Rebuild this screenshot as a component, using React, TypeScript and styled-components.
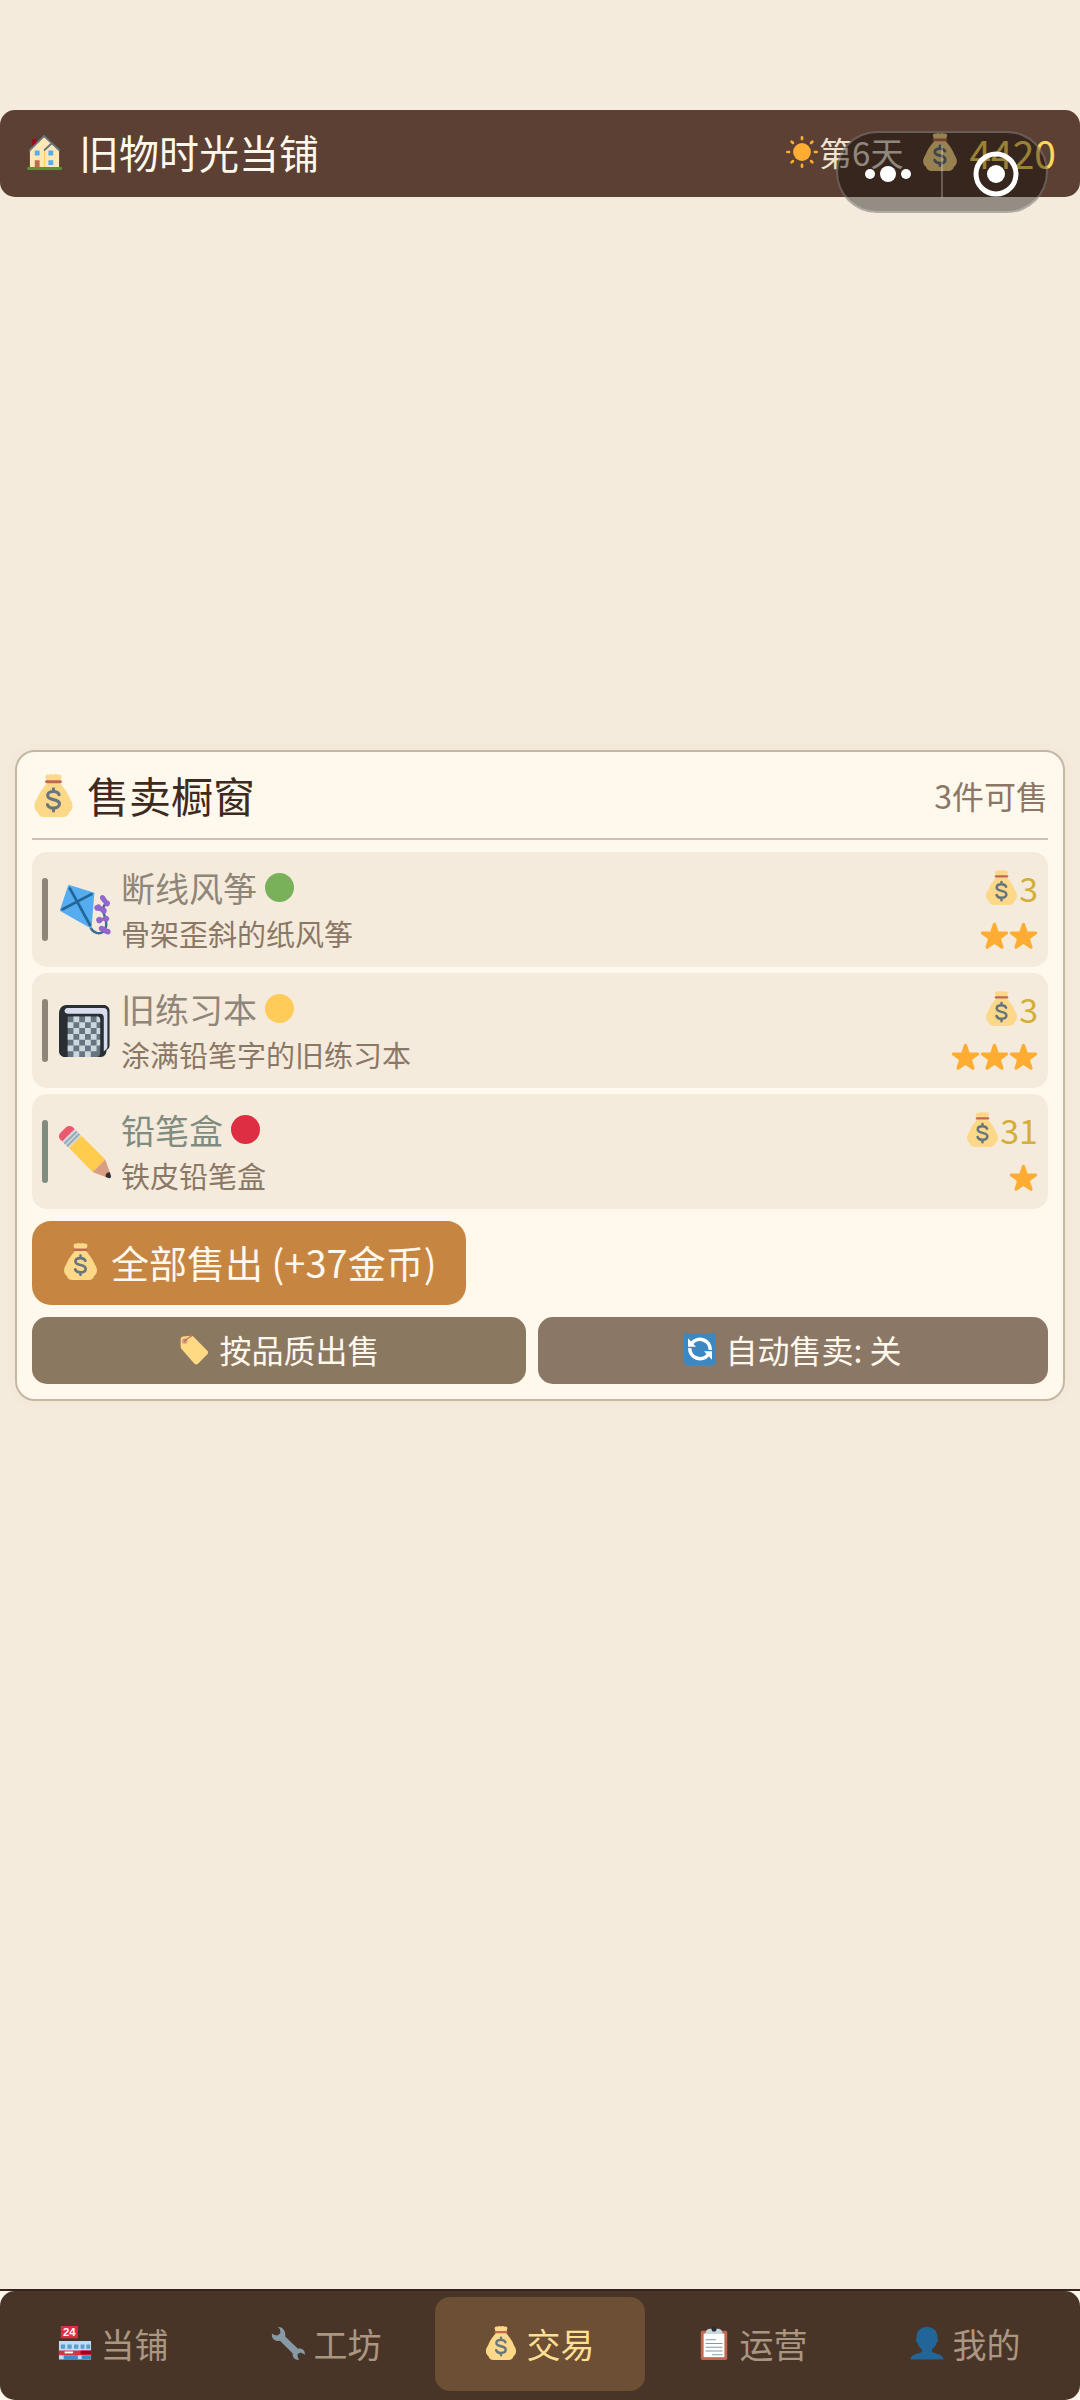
import React from 'react';
import styled, { createGlobalStyle } from 'styled-components';

const GlobalStyle = createGlobalStyle`
   * {
        box-sizing: border-box;
   }
   body {
        margin: 0;
        background: #f5ebdc;
        font-family: "Noto Sans CJK SC", "Noto Sans", sans-serif;
        font-weight: 400;
        color: #3e2a1e;
   }
   button {
        font: inherit;
        border: none;
        cursor: pointer;
   }
`;

const Page = styled.div`
   display: flex;
   flex-direction: column;
   min-height: 100vh;
   padding-top: 110px;
`;

const TopBar = styled.header`
   position: relative;
   display: flex;
   align-items: center;
   justify-content: space-between;
   height: 87px;
   padding: 0 24px 4px 27px;
   border-radius: 15px;
   background: #5c4033;
   color: #fff8ed;
`;

const Brand = styled.h1`
   display: flex;
   align-items: center;
   gap: 17px;
   margin: 0;
   font-size: 40px;
   line-height: 48px;
   font-weight: inherit;
`;

const Status = styled.div`
   display: flex;
   align-items: center;
   font-size: 33px;
   line-height: 48px;
`;

const Day = styled.span`
   margin: 0 18px 0 1px;
   color: #f0e2d0;
`;

const Coins = styled.span`
   margin-left: 10px;
   font-size: 39px;
   color: #ffd85a;
`;

// floats over the top bar, like the mini program host draws it
const Capsule = styled.div`
   position: absolute;
   top: 21px;
   right: 32px;
   display: flex;
   align-items: center;
   width: 212px;
   height: 82px;
   border: 2px solid rgba(255, 255, 255, 0.25);
   border-radius: 41px;
   background: rgba(0, 0, 0, 0.4);
`;

const CapsuleButton = styled.button`
   display: flex;
   flex: 1;
   align-items: center;
   justify-content: center;
   height: 100%;
   padding: 3px 4px 0 0;
   background: none;
   & + & {
        position: relative;
        padding: 3px 0 0 4px;
   }
   & + &::before {
        content: '';
        position: absolute;
        top: 13px;
        left: -1px;
        width: 2px;
        height: 52px;
        background: rgba(255, 255, 255, 0.25);
   }
`;

const Main = styled.main`
   flex: 1;
   padding: 553px 15px 40px;
`;

const Card = styled.section`
   padding: 15px;
   border: 2px solid #c4b8a5;
   border-radius: 20px;
   background: #fff8ed;
   box-shadow: 0 0 12px rgba(92, 64, 51, 0.04);
`;

const CardHeader = styled.div`
   display: flex;
   align-items: center;
   justify-content: space-between;
   height: 73px;
   padding-bottom: 15px;
   border-bottom: 2px solid #cfc3b0;
`;

const CardTitle = styled.h2`
   display: flex;
   align-items: center;
   gap: 12px;
   margin: 0;
   font-size: 42px;
   line-height: 48px;
   font-weight: inherit;
`;

const Count = styled.span`
   font-size: 32px;
   line-height: 48px;
   color: #8b7765;
`;

const List = styled.ul`
   display: flex;
   flex-direction: column;
   gap: 6px;
   margin: 12px 0;
   padding: 0;
   list-style: none;
`;

const Item = styled.li`
   display: flex;
   align-items: center;
   min-height: 115px;
   padding: 0 10px;
   border-radius: 15px;
   background: #f5ebdc;
   .picture {
        margin: 0 10px 0 11px;
   }
`;

const Bar = styled.span<{ $color: string }>`
   width: 6px;
   height: 63px;
   border-radius: 3px;
   background: ${p => p.$color};
`;

const Info = styled.div`
   flex: 1;
   padding-bottom: 2px;
   font-size: 29px;
   line-height: 42px;
   color: #8b7765;
`;

const Name = styled.div<{ $color: string }>`
   display: flex;
   align-items: center;
   gap: 8px;
   font-size: 34px;
   line-height: 48px;
   color: ${p => p.$color};
`;

const Dot = styled.span<{ $color: string }>`
   width: 29px;
   height: 29px;
   border-radius: 50%;
   background: ${p => p.$color};
`;

const Worth = styled.div`
   display: flex;
   flex-direction: column;
   align-items: flex-end;
   padding-top: 4px;
`;

const WorthLine = styled.div`
   display: flex;
   align-items: center;
   height: 48px;
   font-size: 34px;
   line-height: 48px;
   color: #d4af37;
`;

const SellAll = styled.button`
   display: flex;
   align-items: center;
   gap: 12px;
   height: 84px;
   padding: 0 30px 4px;
   border-radius: 19px;
   background: #c68642;
   color: #fff8ed;
   font-size: 38px;
`;

const Actions = styled.div`
   display: flex;
   gap: 12px;
   margin-top: 12px;
`;

const Action = styled.button<{ $color: string }>`
   display: flex;
   flex: 1 1 auto;
   align-items: center;
   justify-content: center;
   gap: 9px;
   height: 67px;
   padding: 0 6px 4px;
   border-radius: 15px;
   background: ${p => p.$color};
   color: #fff8ed;
   font-size: 32px;
`;

const NavShell = styled.footer`
   border-top: 2px solid #34241a;
   background: #fff8ed;
`;

const Nav = styled.nav`
   display: flex;
   gap: 3px;
   padding: 6px 9px 9px;
   border-radius: 15px;
   background: #483528;
`;

const Tab = styled.button<{ $active?: boolean }>`
   display: flex;
   flex: 1 1 0;
   align-items: center;
   justify-content: center;
   gap: 9px;
   height: 94px;
   padding: 0 2px 2px 0;
   border-radius: 15px;
   background: ${p => (p.$active ? '#6d4f36' : 'transparent')};
   color: ${p => (p.$active ? '#ffdf91' : '#ab9682')};
   font-size: 34px;
`;

type IconProps = { size: number; className?: string };

const Drawing = styled.svg`
   flex-shrink: 0;
   overflow: visible;
`;

const Svg = ({ size, className, children }: IconProps & { children: React.ReactNode }) => (
    <Drawing className={className} width={size} height={size} viewBox='0 0 36 36' aria-hidden='true'>
        {children}
    </Drawing>
);

const MoneyBag = (props: IconProps) => <Svg {...props}>
    <path fill='#FDD888' d='M13 6.500C11.500 4.500 10.800 2.300 11.600 1.200 12.300.200 13.500.300 14.300.800 15.200-.200 16.900-.200 18 .600 19.100-.200 20.800-.200 21.700.800 22.500.300 23.700.200 24.400 1.200 25.200 2.300 24.500 4.500 23 6.500z' />
    <path fill='#FDD888' d='M12.600 7.500h10.800c2.500 3.300 6.300 7.200 8 12.300.5 1.500 2.600 3.600 2.600 6.700 0 3-1.500 4.600-2.800 5.500-.4 2.500-2.400 4-5.200 4H10c-2.800 0-4.800-1.500-5.200-4C3.500 31.100 2 29.500 2 26.500c0-3.100 2.100-5.200 2.600-6.700 1.700-5.100 5.500-9 8-12.300z' />
    <path fill='#BF6952' d='M12.200 5.300h11.600c1.600 0 1.600 2.400 0 2.400H12.200c-1.600 0-1.600-2.400 0-2.400z' />
    <path fill='none' stroke='#67757F' strokeWidth='2.600' strokeLinecap='round' d='M22.700 17.200c-.7-1.700-2.500-2.500-4.700-2.500-2.900 0-4.900 1.300-4.900 3.300 0 4.700 9.900 2.200 9.900 7 0 2.200-2.100 3.600-5 3.600-2.500 0-4.400-1-5.100-2.900M18 12.300v2.200M18 28.800v2.200' />
</Svg>;

const House = (props: IconProps) => <Svg {...props}>
    <path fill='#A0041E' d='M5.500 5h4v9h-4z' />
    <path fill='#FFE8B6' d='M3 16.500 17.500 3 33 16.500V34H3z' />
    <path fill='#FFCC4D' d='M17.500 17h1v17h-1z' />
    <path fill='none' stroke='#66757F' strokeWidth='1.900' d='M2.500 17 17.500 2 33.500 17M17.500 17l8-7.500' />
    <path fill='#C1694F' d='M8 27h5v7H8z' />
    <path fill='#5C913B' d='M1.500 34h33a1.500 1.500 0 0 1 0 3h-33a1.500 1.500 0 0 1 0-3z' />
    <path fill='#55ACEE' d='M8 17h5v5H8zM22 17h5v5h-5zM22 27h5v5h-5z' />
</Svg>;

const Sun = (props: IconProps) => <Svg {...props}>
    <circle cx='18' cy='18' r='10' fill='#FFAC33' />
    <path stroke='#FFAC33' strokeWidth='3' strokeLinecap='round' d='M18 1.500v2M18 32.500v2M1.500 18h2M32.500 18h2M6.300 6.300l1.500 1.500M28.200 28.200l1.500 1.500M29.700 6.300l-1.500 1.500M7.800 28.200l-1.500 1.500' />
</Svg>;

const Kite = (props: IconProps) => <Svg {...props}>
    <path fill='none' stroke='#3B6E94' strokeWidth='1.700' strokeLinecap='round' d='M22 30.500c2 3.500 6 4.500 8.500 2.500 3-2.500 2.500-7 1-11-1-2.700-1.500-5 0-7.500' />
    <path fill='#9266CC' d='M29 8a2 2 0 0 1 3 1l1.500 2.500A2 2 0 1 1 33 15.500c-1 0-2-1-2-2L29 11a2 2 0 0 1 0-3zM26 14.500a2 2 0 0 1 3 .5l2 1.500a2 2 0 1 1 0 4c-1 0-1.500-.5-2-1.500l-2-.5a2 2 0 0 1-1-4zM27 23a2 2 0 0 1 2.500.5l2-1a2 2 0 1 1 1 3.500l-2-.5L29 27a2 2 0 0 1-2-4zM28 29.500a2 2 0 0 1 3 0l2.500 1.500a2 2 0 1 1-1 3.500c-1 0-1.500-1-2-1.500l-2-.5a2 2 0 0 1-.5-3z' />
    <path fill='#55ACEE' d='M6.500.500 24.500 6l-2 25L.500 18.500z' />
    <path stroke='#226699' strokeWidth='1.900' strokeLinecap='round' d='M7.500 3 21.500 28.500M2.500 17.500 22.500 7' />
</Svg>;

const Notebook = (props: IconProps) => <Svg {...props}>
    <path fill='#292F33' d='M5 0h26c2.200 0 4 1.700 4 4v24c0 1.500-1 2.500-2 3-.2 3-1.500 5-4 5H4c-2.200 0-4-1.800-4-4V6c0-3.500 2-6 5-6z' />
    <path fill='#D7DDEF' d='M6 2h25c1.700 0 2.500 1.200 2.500 3v24c-.5 1.500-1 2-2.500 3V8.500c0-1.500-.8-2.500-2.500-2.500H6c-3 0-2.800-4 0-4z' />
    <path fill='#66757F' d='M6 8h20.500c1.200 0 2 .8 2 2v23c0 1.500-1 3-2.500 3H6z' />
    <path fill='#CCD6DD' d='M10 8h4v4h-4zM18 8h4v4h-4zM26 8h.5c1.200 0 2 1 2 2v2H26zM6 12h4v4H6zM14 12h4v4h-4zM22 12h4v4h-4zM10 16h4v4h-4zM18 16h4v4h-4zM26 16h2.500v4H26zM6 20h4v4H6zM14 20h4v4h-4zM22 20h4v4h-4zM10 24h4v4h-4zM18 24h4v4h-4zM26 24h2.500v4H26zM6 28h4v4H6zM14 28h4v4h-4zM22 28h4v4h-4zM10 32h4v4h-4zM18 32h4v4h-4z' />
</Svg>;

const Pencil = (props: IconProps) => <Svg {...props}>
    <path fill='#EA596E' d='M1 9.500C-.5 8-.4 6 1 4.600L4.700 1C6.200-.4 8.300-.4 9.800 1L11 2.300 2.400 10.800z' />
    <path fill='#CCD6DD' d='m2.200 10.700 8.600-8.500 4.700 4.500-8.700 8.600z' />
    <path fill='none' stroke='#99AAB5' strokeWidth='1.300' d='m3.700 12.300 8.700-8.600M5.500 14l8.600-8.600' />
    <path fill='#FFCC4D' d='m7 15.300 8.600-8.600L32 23.200l-8.700 8.700z' />
    <path fill='#D99E82' d='m23.300 31.900 8.700-8.700 4 11c.3 1.200-.7 2.200-1.900 1.800z' />
    <path fill='#292F33' d='M32.500 35.300c-.6-1.600.5-3.400 2.600-3.300l.8 2.400c.4 1.100-.6 2-1.700 1.600z' />
</Svg>;

const Star = (props: IconProps) => <Svg {...props}>
    <path fill='#FFAC33' d='M27.287 34.627c-.404 0-.806-.124-1.152-.371L18 28.422l-8.135 5.834c-.343.247-.746.371-1.148.371-.408 0-.816-.126-1.162-.380-.694-.504-.985-1.394-.723-2.209l3.034-9.792-8.062-5.681c-.685-.505-.970-1.393-.708-2.207.264-.814 1.018-1.364 1.874-1.372l9.947-.015 3.179-9.549c.276-.807 1.036-1.349 1.890-1.349s1.612.542 1.886 1.349l3.139 9.549 9.987.015c.856.008 1.610.558 1.874 1.372.264.814-.023 1.702-.708 2.207l-8.062 5.681 3.034 9.792c.262.815-.029 1.705-.723 2.209-.346.254-.754.380-1.162.380z' />
</Svg>;

const Tag = (props: IconProps) => <Svg {...props}>
    <path fill='#FFD983' d='M3 7c0-2 1-3 3-3.200L14.500 3c1.200 0 2 .3 3 1.300L33 20c1.200 1.200 1.200 2.800 0 4L22.500 34.500c-1.200 1.200-2.800 1.200-4 0L4 18c-.7-1-1-1.700-1-3z' />
    <circle cx='7.500' cy='9' r='3.200' fill='#D99E82' />
    <path fill='none' stroke='#C1694F' strokeWidth='1.500' strokeLinecap='round' d='M7.500 9c2-2 4-3.500 6-4.500 2.500-1.200 3-2.500 1.500-4' />
</Svg>;

const Refresh = (props: IconProps) => <Svg {...props}>
    <rect width='36' height='36' rx='3' fill='#3B88C3' />
    <path fill='none' stroke='#fff' strokeWidth='4' d='M9 11.500A11.500 11.500 0 0 1 29.500 19M27 24.500A11.500 11.500 0 0 1 6.500 17' />
    <path fill='#fff' d='M4.500 6v9.500h9zM31.500 30v-9.500h-9z' />
</Svg>;

const Store = (props: IconProps) => <Svg {...props}>
    <path fill='#DD2E44' d='M3 0h18v13H3z' />
    <text x='12' y='11' textAnchor='middle' fontFamily='Liberation Sans, sans-serif' fontSize='12' fontWeight='700' fill='#fff'>24</text>
    <path fill='#BDDDF4' d='M1 16h34v19.500H1z' />
    <path fill='#DD2E44' d='M1 26h34v5H1z' />
    <path fill='#5D9BCB' d='M3 19.500h4.500V24H3zM10 19.500h4.500V24H10zM17 19.500h4.500V24H17zM24 19.500h4V24h-4zM30 19.500h4V24h-4z' />
    <path fill='#4289C1' d='M6 31h15v5H6zM25 31h10v4H25z' />
    <path fill='#fff' d='M7 27h9v2H7z' />
    <path fill='#A0041E' d='M24 26h11v4H24z' />
</Svg>;

const Wrench = (props: IconProps) => <Svg {...props}>
    <path fill='#8899A6' d='M1 8c-.8 6 4 9 8.500 7.500L23 29c-.5 4 2.500 7.500 7 6.500l-1.500-2-.5-3.500 3-2 3.500 1.500 1.200 1.500c1-5-3-8-7.200-6.800L15 11C16 6 12.500.5 7.500 1l2 2.500.5 4-3 2.500-3.500-.5z' />
</Svg>;

const Clipboard = (props: IconProps) => <Svg {...props}>
    <path fill='#C1694F' d='M6 5h24c1.300 0 2 .7 2 2v27c0 1.300-.7 2-2 2H6c-1.300 0-2-.7-2-2V7c0-1.300.7-2 2-2z' />
    <path fill='#fff' d='M7 8h22v25H7z' />
    <path fill='#CCD6DD' d='M9 8.500C9 5 11 3 14 3h8c3 0 5 2 5 5.500z' />
    <circle cx='18' cy='3.200' r='2.700' fill='#292F33' />
    <path stroke='#8899A6' strokeWidth='1.200' d='M9 14.500h11M9 18.500h18M9 22.500h18M9 26.500h18M16 30.500h11' />
</Svg>;

const Person = (props: IconProps) => <Svg {...props}>
    <path fill='#226699' d='M18 1c7 0 11 4.500 11 10.500 0 1 0 1.500.3 2 1 1.500.2 3.500-1 4-1 3.500-2.800 6-5 7.500v2.500c2 1.500 12.200 2 12.200 8H.5c0-6 10.200-6.500 12.200-8V25c-2.200-1.500-4-4-5-7.500-1.200-.5-2-2.500-1-4 .3-.5.300-1 .300-2C7 5.500 11 1 18 1z' />
</Svg>;

const items = [
    { name: '断线风筝', text: '骨架歪斜的纸风筝', icon: Kite, dot: '#78B159', color: '#8f8578', price: 3, stars: 2 },
    { name: '旧练习本', text: '涂满铅笔字的旧练习本', icon: Notebook, dot: '#FFCC5A', color: '#8f8578', price: 3, stars: 3 },
    { name: '铅笔盒', text: '铁皮铅笔盒', icon: Pencil, dot: '#DD2E44', color: '#7f8c7f', price: 31, stars: 1 },
];

const tabs = [
    { label: '当铺', icon: Store },
    { label: '工坊', icon: Wrench },
    { label: '交易', icon: MoneyBag, active: true },
    { label: '运营', icon: Clipboard },
    { label: '我的', icon: Person },
];

const Header = () => {
    return <TopBar>
        <Brand><House size={35}/>旧物时光当铺</Brand>
        <Status>
            <Sun size={32}/>
            <Day>第6天</Day>
            <MoneyBag size={38}/>
            <Coins>4420</Coins>
        </Status>
        <Capsule>
            <CapsuleButton aria-label='更多'>
                <svg width='46' height='18' viewBox='0 0 46 18' fill='#fff'>
                    <circle cx='5' cy='9' r='5'/>
                    <circle cx='23' cy='9' r='8'/>
                    <circle cx='41' cy='9' r='5'/>
                </svg>
            </CapsuleButton>
            <CapsuleButton aria-label='关闭'>
                <svg width='46' height='46' viewBox='0 0 46 46'>
                    <circle cx='23' cy='23' r='20' fill='none' stroke='#fff' strokeWidth='5'/>
                    <circle cx='23' cy='23' r='9' fill='#fff'/>
                </svg>
            </CapsuleButton>
        </Capsule>
    </TopBar>
};

const App = () => {
    return <Page>
        <GlobalStyle/>
        <Header/>
        <Main>
            <Card>
                <CardHeader>
                    <CardTitle><MoneyBag size={43}/>售卖橱窗</CardTitle>
                    <Count>3件可售</Count>
                </CardHeader>
                <List>
                    {items.map(({ icon: Icon, ...item }) => (
                        <Item key={item.name}>
                            <Bar $color={item.color}/>
                            <Icon size={52} className='picture'/>
                            <Info>
                                <Name $color={item.color}>{item.name}<Dot $color={item.dot}/></Name>
                                {item.text}
                            </Info>
                            <Worth>
                                <WorthLine><MoneyBag size={35}/>{item.price}</WorthLine>
                                <WorthLine>
                                    {Array.from({ length: item.stars }, (_, i) => <Star key={i} size={29}/>)}
                                </WorthLine>
                            </Worth>
                        </Item>
                    ))}
                </List>
                <SellAll><MoneyBag size={37}/>全部售出 (+37金币)</SellAll>
                <Actions>
                    <Action $color='#8b7860'><Tag size={32}/>按品质出售</Action>
                    <Action $color='#8b7765'><Refresh size={32}/>自动售卖: 关</Action>
                </Actions>
            </Card>
        </Main>
        <NavShell>
            <Nav>
                {tabs.map(({ label, icon: Icon, active }) => (
                    <Tab key={label} $active={active}><Icon size={34}/>{label}</Tab>
                ))}
            </Nav>
        </NavShell>
    </Page>
};

export default App;
